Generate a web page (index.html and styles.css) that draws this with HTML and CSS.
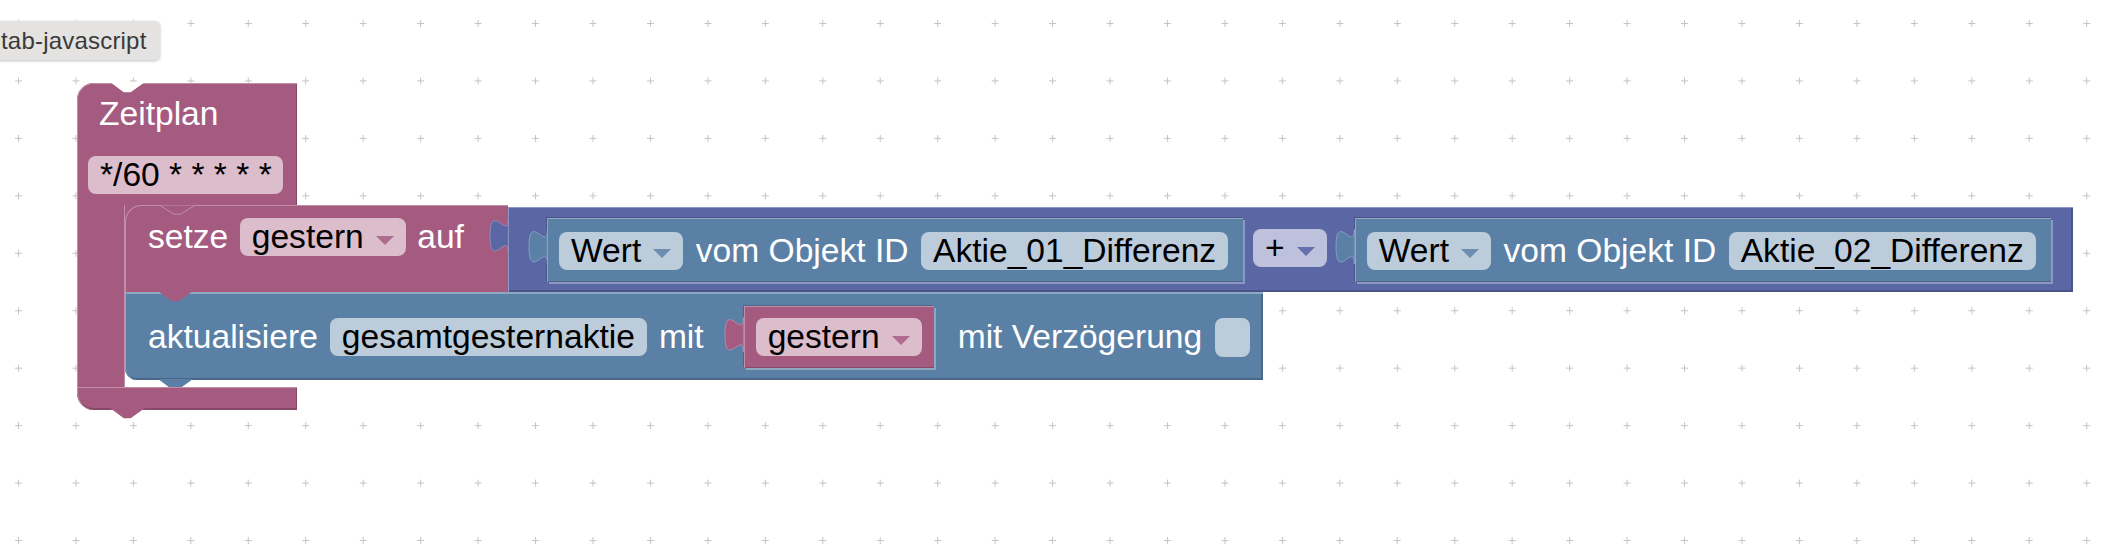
FILE: index.html
```html
<!DOCTYPE html>
<html>
<head>
<meta charset="utf-8">
<link rel="stylesheet" href="styles.css">
</head>
<body>
<div class="ws">
  <svg class="grid" width="2116" height="556">
    <defs>
      <pattern id="g" x="15" y="20" width="57.45" height="57.45" patternUnits="userSpaceOnUse">
        <path d="M0 3.5H7M3.5 0V7" stroke="#c4c4c4" stroke-width="1" fill="none"/>
      </pattern>
    </defs>
    <rect width="2116" height="556" fill="url(#g)"/>
  </svg>

  <div class="tip">tab-javascript</div>

  <div class="stack">
    <div class="zp">
      <div class="zp-head">
        <svg class="notch" viewBox="0 0 35 10"><polygon class="fill-white" points="0,-1 35,-1 20.7,9.2 13.8,9.2"/></svg>
        <div class="lbl">Zeitplan</div>
        <div class="fld fld-pk cron">*/60 * * * * *</div>
      </div>
      <div class="zp-mid">
        <div class="zp-arm"></div>
        <div class="zp-body">
          <div class="row-setze">
            <div class="blk setze">
              <svg class="notch notch-in" viewBox="0 0 35 10"><polyline class="fill-pk hl-pk" points="0,0.5 13.8,9.2 20.7,9.2 34.5,0.5"/></svg>
              <span class="lbl">setze</span>
              <span class="fld fld-pk">gestern<i class="arr arr-pk"></i></span>
              <span class="lbl">auf</span>
            </div>
            <div class="blk math">
              <svg class="tab tab-pu" viewBox="0 0 19 50"><path d="M18.4,11.5 C18.4,34.5 0,-6.9 0,28.75 C0,64.4 18.4,23 18.4,46 Z"/></svg>
              <div class="blk get">
                <svg class="tab tab-bl" viewBox="0 0 19 50"><path d="M18.4,11.5 C18.4,34.5 0,-6.9 0,28.75 C0,64.4 18.4,23 18.4,46 Z"/></svg>
                <span class="fld fld-bl">Wert<i class="arr arr-bl"></i></span>
                <span class="lbl">vom Objekt ID</span>
                <span class="fld fld-bl">Aktie_01_Differenz</span>
              </div>
              <span class="fld fld-pu op">+<i class="arr arr-pu"></i></span>
              <div class="blk get get2">
                <svg class="tab tab-bl" viewBox="0 0 19 50"><path d="M18.4,11.5 C18.4,34.5 0,-6.9 0,28.75 C0,64.4 18.4,23 18.4,46 Z"/></svg>
                <span class="fld fld-bl">Wert<i class="arr arr-bl"></i></span>
                <span class="lbl">vom Objekt ID</span>
                <span class="fld fld-bl">Aktie_02_Differenz</span>
              </div>
            </div>
          </div>
          <div class="blk upd">
            <svg class="notch" viewBox="0 0 35 10"><polygon class="fill-pk" points="0,-1 35,-1 20.7,9.2 13.8,9.2"/></svg>
            <svg class="notch notch-bottom" viewBox="0 0 35 10"><polygon class="fill-bl" points="0,-1 35,-1 20.7,9.2 13.8,9.2"/></svg>
            <span class="lbl">aktualisiere</span>
            <span class="fld fld-bl">gesamtgesternaktie</span>
            <span class="lbl">mit</span>
            <div class="blk var">
              <svg class="tab tab-pk" viewBox="0 0 19 50"><path d="M18.4,11.5 C18.4,34.5 0,-6.9 0,28.75 C0,64.4 18.4,23 18.4,46 Z"/></svg>
              <span class="fld fld-pk">gestern<i class="arr arr-pk"></i></span>
            </div>
            <span class="lbl delay">mit Verzögerung</span>
            <span class="chk"></span>
          </div>
        </div>
      </div>
      <div class="zp-foot">
        <svg class="notch notch-bottom" viewBox="0 0 35 10"><polygon class="fill-pk" points="0,-1 35,-1 20.7,9.2 13.8,9.2"/></svg>
      </div>
    </div>
  </div>
</div>
</body>
</html>
```

FILE: styles.css
```css
* { box-sizing: border-box; }

html, body {
  margin: 0;
  padding: 0;
  background: #ffffff;
}

body {
  width: 2116px;
  height: 556px;
  overflow: hidden;
  font-family: "Liberation Sans", Arial, sans-serif;
}

.ws {
  position: relative;
  width: 2116px;
  height: 556px;
  overflow: hidden;
  --pk: #a55b80;
  --pk-hl: #c28ea8;
  --pk-dk: #864a68;
  --pk-f: #dcbdcc;
  --bl: #5b80a5;
  --bl-hl: #8ea8c2;
  --bl-dk: #4a6886;
  --bl-f: #bdccdb;
  --pu: #5b67a5;
  --pu-hl: #8e97c4;
  --pu-dk: #4a5488;
  --pu-f: #bdc1dc;
}

.grid {
  position: absolute;
  left: 0;
  top: 0;
}

/* tooltip */
.tip {
  position: absolute;
  left: -8px;
  top: 21px;
  height: 39px;
  width: 168px;
  padding-left: 9px;
  background: #e4e3e1;
  border-radius: 5px;
  box-shadow: 0 1px 3px rgba(0, 0, 0, 0.25);
  color: #3a3a3a;
  font-size: 24px;
  letter-spacing: 0.2px;
  line-height: 39px;
  white-space: nowrap;
}

/* block stack on canvas */
.stack {
  position: absolute;
  left: 77px;
  top: 83px;
  font-size: 33.6px;
}

.zp {
  display: flex;
  flex-direction: column;
  align-items: flex-start;
}

.zp-head {
  position: relative;
  width: 220px;
  height: 122px;
  background: var(--pk);
  border-radius: 17px 0 0 0;
  padding: 12px 0 0 22px;
  box-shadow: inset 0 1px 0 var(--pk-hl), inset 1px 0 0 var(--pk-hl), inset -1px 0 0 var(--pk-dk);
}

.cron {
  margin-top: 23px;
  margin-left: -11px;
  width: 195px;
}

.zp-mid {
  display: flex;
}

.zp-arm {
  width: 48px;
  background: var(--pk);
  box-shadow: inset 1px 0 0 var(--pk-hl), inset -1px 0 0 var(--pk-hl);
}

.zp-body {
  display: flex;
  flex-direction: column;
  align-items: flex-start;
  padding-bottom: 7px;
  background: linear-gradient(var(--pk), var(--pk)) no-repeat 0 0 / 20px 20px;
}

.zp-foot {
  position: relative;
  width: 220px;
  height: 23px;
  background: var(--pk);
  border-radius: 0 0 0 17px;
  box-shadow: inset 0 1px 0 var(--pk-hl), inset 1px 0 0 var(--pk-hl), inset 0 -2px 0 var(--pk-dk), inset -1px 0 0 var(--pk-dk);
}

/* notch / tab shapes */
.notch {
  position: absolute;
  left: 33px;
  top: 0;
  width: 35px;
  height: 10px;
  overflow: visible;
}

.notch-in {
  left: 35px;
}

.notch-bottom {
  top: 100%;
}

.zp-foot .notch-bottom {
  margin-top: -1px;
}

.fill-white { fill: #ffffff; }
.fill-pk { fill: var(--pk); }
.fill-bl { fill: var(--bl); }
.hl-pk { stroke: var(--pk-hl); stroke-width: 1; }

.tab {
  position: absolute;
  left: -18.4px;
  top: 0;
  width: 19px;
  height: 50px;
  overflow: visible;
}

.tab path { stroke-width: 0.8; }
.tab-pu path { fill: var(--pu); stroke: var(--pu-hl); }
.tab-bl path { fill: var(--bl); stroke: var(--bl-hl); }
.tab-pk path { fill: var(--pk); stroke: var(--pk-hl); }

/* generic pieces */
.blk {
  position: relative;
  display: flex;
}

.lbl {
  color: #ffffff;
  line-height: 38px;
  height: 38px;
  white-space: nowrap;
}

.fld {
  display: flex;
  align-items: center;
  height: 38px;
  line-height: 38px;
  padding: 0 12px;
  border-radius: 8px;
  color: #000000;
  white-space: nowrap;
}

.fld-pk { background: var(--pk-f); }
.fld-bl { background: var(--bl-f); }
.fld-pu { background: var(--pu-f); }

.arr {
  display: block;
  width: 0;
  height: 0;
  margin-left: 12px;
  margin-top: 6px;
  border-left: 9px solid transparent;
  border-right: 9px solid transparent;
  border-top: 9px solid;
}

.arr-pk { border-top-color: #b06c8e; }
.arr-bl { border-top-color: #6b8db0; }
.arr-pu { border-top-color: #6670b0; }

/* setze block */
.row-setze {
  display: flex;
  align-items: flex-start;
}

.setze {
  width: 383px;
  height: 87px;
  padding: 13px 0 0 23px;
  gap: 11.5px;
  align-items: flex-start;
  background: var(--pk);
  border-radius: 17px 0 0 0;
  box-shadow: inset 0 1px 0 var(--pk-hl), inset 1px 0 0 var(--pk-hl);
}

/* math block */
.math {
  width: 1565px;
  height: 85px;
  margin-top: 2px;
  padding: 11px 0 0 39px;
  align-items: flex-start;
  background: var(--pu);
  box-shadow: inset 0 1px 0 var(--pu-hl), inset 1px 0 0 var(--pu-hl), inset 0 -2px 0 var(--pu-dk), inset -2px 0 0 var(--pu-dk);
}

.op {
  margin: 11px 0 0 10px;
}

/* value blocks */
.get {
  height: 64px;
  padding: 13.5px 15px 0 12px;
  gap: 12.5px;
  align-items: flex-start;
  background: var(--bl);
  box-shadow: inset 0 1px 0 var(--bl-hl), inset 1px 0 0 var(--bl-hl), inset 0 -1px 0 var(--bl-dk), 2px 2px 0 var(--pu-hl), -1px -1px 0 var(--pu-dk);
}

.get2 {
  margin-left: 28px;
}

.var {
  margin-left: 28px;
  height: 62px;
  padding: 0 12px;
  align-items: center;
  background: var(--pk);
  box-shadow: inset 0 1px 0 var(--pk-hl), inset 1px 0 0 var(--pk-hl), inset 0 -1px 0 var(--pk-dk), 2px 2px 0 var(--bl-hl), -1px -1px 0 var(--bl-dk);
}

/* aktualisiere block */
.upd {
  width: 1138px;
  height: 88px;
  padding: 2px 0 0 23px;
  gap: 12px;
  align-items: center;
  background: var(--bl);
  border-radius: 0 0 0 12px;
  box-shadow: inset 0 2px 0 var(--bl-hl), inset 1px 0 0 var(--bl-hl), inset 0 -2px 0 var(--bl-dk), inset -2px 0 0 var(--bl-dk);
}

.delay {
  margin-left: 12px;
}

.chk {
  display: block;
  width: 35px;
  height: 39px;
  margin-left: 1px;
  border-radius: 8px;
  background: var(--bl-f);
}
```
